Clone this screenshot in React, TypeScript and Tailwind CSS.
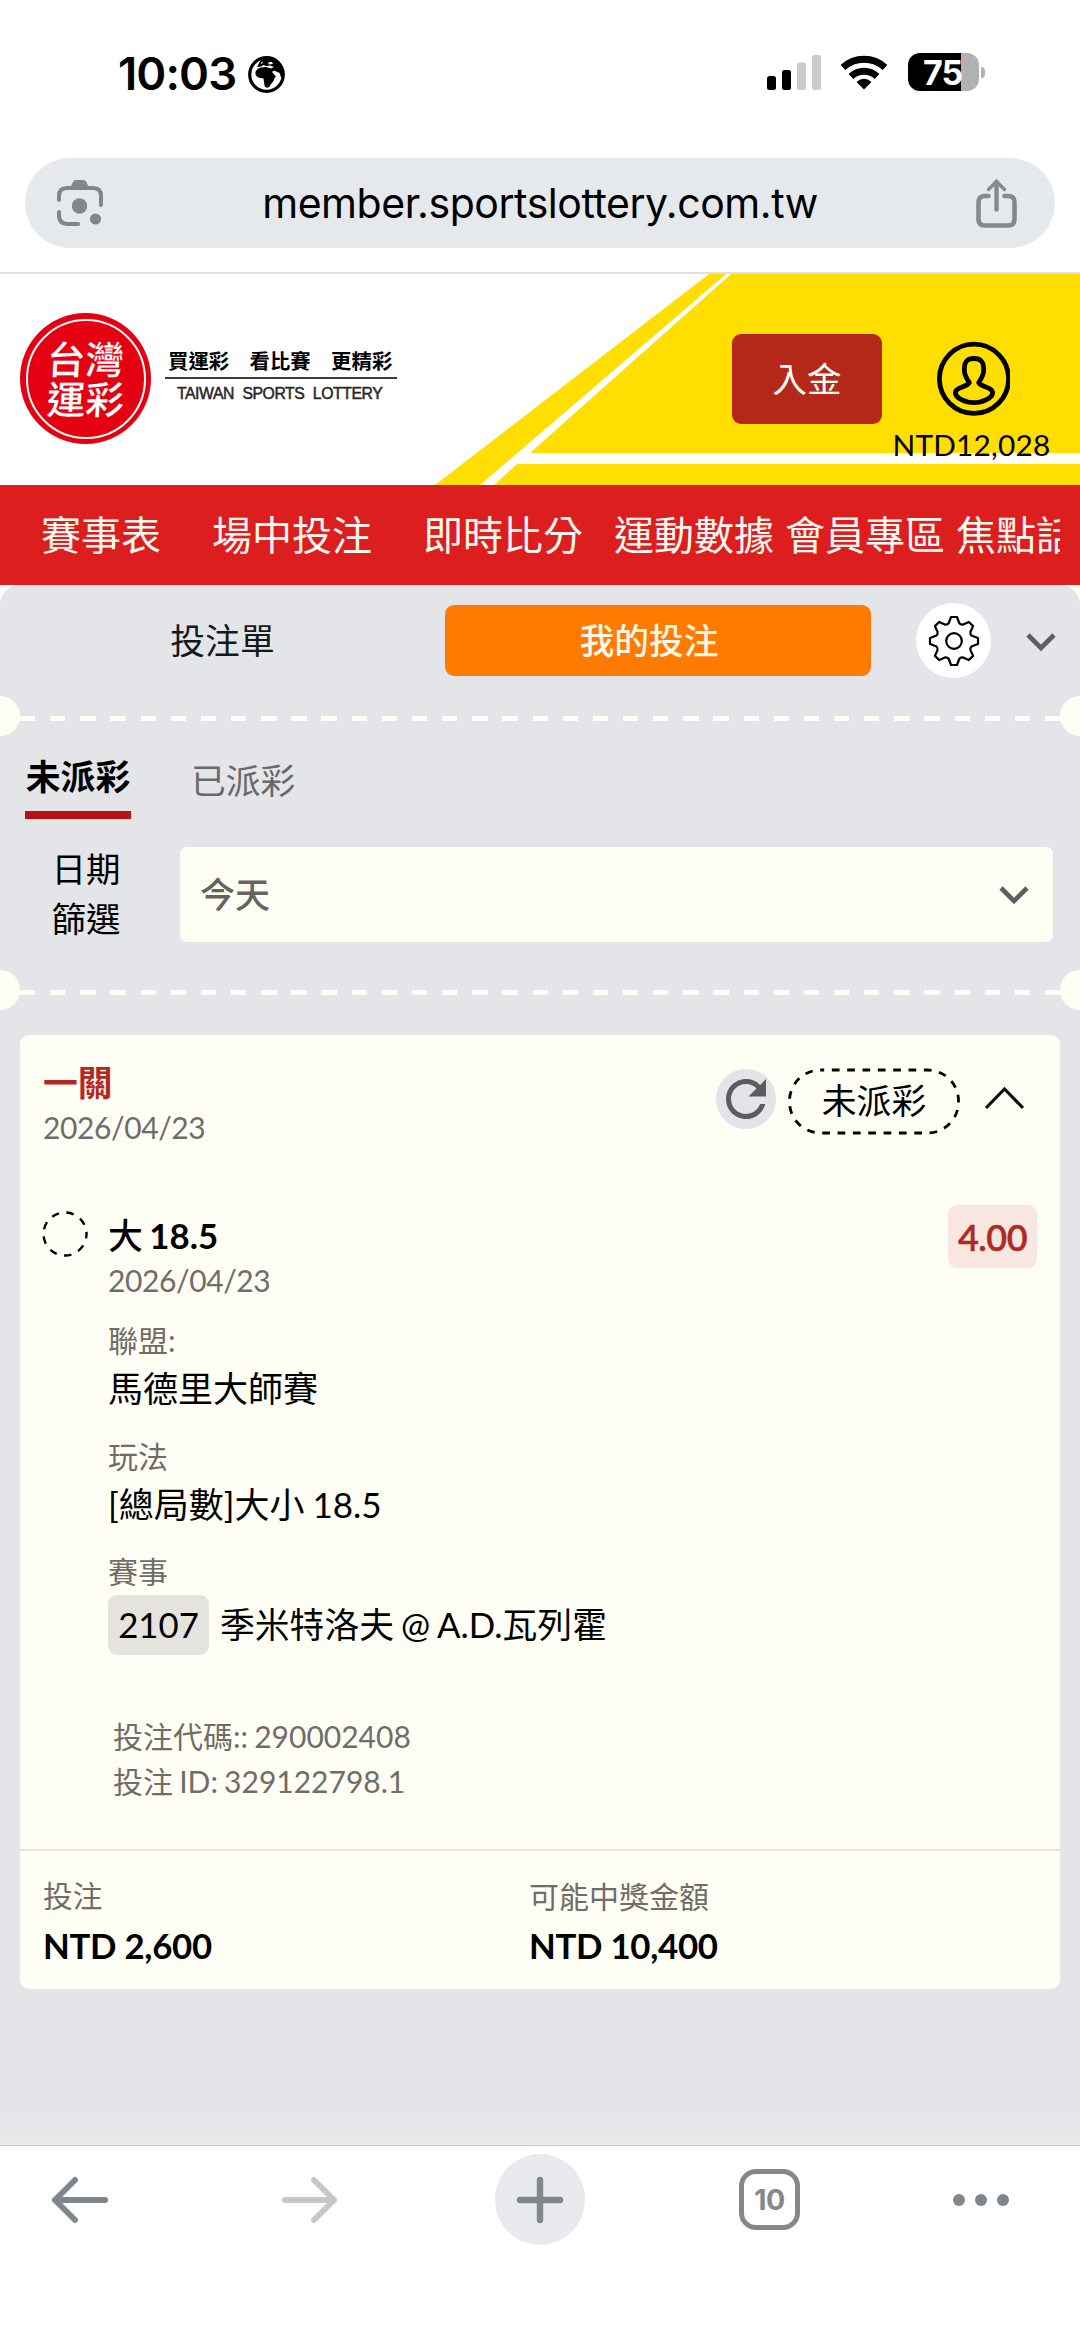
import { MdRefresh } from 'react-icons/md';

const navItems = [
  { label: '賽事表', gap: 'mr-[51px]' },
  { label: '場中投注', gap: 'mr-[51px]' },
  { label: '即時比分', gap: 'mr-[31px]' },
  { label: '運動數據', gap: 'mr-[11px]' },
  { label: '會員專區', gap: 'mr-[11px]' },
  { label: '焦點話題', gap: '' },
];

function StatusBar() {
  return (
    <div className="flex h-[158px] items-start justify-between bg-white pt-[53px] pr-[95px] pl-[118px] font-['Inter','Liberation_Sans',sans-serif]">
      <div className="flex items-center">
        <span className="w-[130px] text-[45.5px] leading-[42px] font-semibold tracking-[-0.9px] whitespace-nowrap">10:03</span>
        <svg className="h-[37px] w-[37px]" viewBox="0 0 37 37">
          <circle cx="18.5" cy="18.5" r="16.8" fill="#fff" stroke="#000" strokeWidth="3.2" />
          <path d="M9 11 C12 6 11 4 17 2.5 C25 1 32 5 35 12 L36 21 L33.5 22 C32 20 32.500 17 30.500 16.500 L26 14.500 L24 16 L28 20.500 L26.500 22 C26 26 23 27 22 30 C20.500 32.500 17 32 16.500 29.500 L15.500 22.500 C12 22 8 21.500 7.500 18 C7.200 14.500 10 12 13 11.500 L18 11 L23 12.500 L26 11 L22 9.500 L18 10 L15.500 9 L13 10.500 Z" />
          <path d="M20 6.500 L24 6 L25 8 L21 8.500 Z M12.500 7 L15 5.500 L14 8 Z" fill="#fff" />
        </svg>
      </div>
      <div className="flex items-start">
        <svg className="mt-[2px] h-[36px] w-[54px]" viewBox="0 0 54 36">
          <rect x="0" y="21" width="9" height="14" rx="2.500" />
          <rect x="15" y="15" width="9" height="20" rx="2.500" />
          <rect x="30" y="7.500" width="9" height="27.500" rx="2.500" fill="#cbcbcb" />
          <rect x="45" y="0" width="9" height="35" rx="2.500" fill="#cbcbcb" />
        </svg>
        <svg className="mt-[1px] ml-[19px] h-[36px] w-[48px]" viewBox="0 0 48 36">
          <path d="M3 13.500 A31 31 0 0 1 45 13.500" fill="none" stroke="#000" strokeWidth="7" />
          <path d="M11 22.500 A19 19 0 0 1 37 22.500" fill="none" stroke="#000" strokeWidth="7" />
          <path d="M24 35.500 L16.500 28 Q24 21.500 31.500 28 Z" />
        </svg>
        <div className="ml-5 flex h-[38px] w-[71px] items-center rounded-[12px] bg-[linear-gradient(to_right,#000_53px,#b1b1b1_53px)] pt-[1px] pl-[15px] text-[34px] leading-none font-bold tracking-[-1px] text-white">
          75
        </div>
        <div className="mt-[14px] ml-[2px] h-[11px] w-[4px] rounded-r-full bg-[#b1b1b1]" />
      </div>
    </div>
  );
}

function AddressBar() {
  return (
    <div className="h-[116px] border-b-2 border-[#e0e0e2] bg-white px-[25px]">
      <div className="flex h-[90px] items-center justify-between rounded-full bg-[#e6e9ec] pr-[38px] pl-[32px]">
        <svg className="h-[46px] w-[47px]" viewBox="0 0 47 46" fill="none" stroke="#828689" strokeWidth="4" strokeLinecap="round">
          <path d="M2 20 V16 Q2 8 10 8 H36 Q44 8 44 16 V25" />
          <path d="M2 32 V35 Q2 44 11 44 H21" />
          <path d="M13 8 L16 2 Q17 0 19 0 H26 Q28 0 29.500 2 L32 8 Z" fill="#828689" stroke="none" />
          <circle cx="22.500" cy="26" r="7.700" fill="#828689" stroke="none" />
          <circle cx="38.500" cy="39" r="5.600" fill="#828689" stroke="none" />
        </svg>
        <span className="font-['Inter','Liberation_Sans',sans-serif] text-[41px] leading-[50px] tracking-[-0.45px] whitespace-nowrap">
          member.sportslottery.com.tw
        </span>
        <svg className="h-[49px] w-[41px]" viewBox="0 0 41 49" fill="none" stroke="#85898c" strokeLinecap="round">
          <path d="M12.500 17 H9 Q2.500 17 2.500 23 V40 Q2.500 46.500 9 46.500 H32 Q38.500 46.500 38.500 40 V23 Q38.500 17 32 17 H28.500" strokeWidth="4.600" />
          <path d="M20.500 3 V30.500" strokeWidth="4.400" />
          <path d="M12.500 10.500 L20.500 2.500 L28.500 10.500" strokeWidth="3.400" />
        </svg>
      </div>
    </div>
  );
}

function Header() {
  return (
    <header className="relative h-[211px] overflow-hidden bg-white">
      <svg className="absolute inset-0 h-[211px] w-[1080px]" viewBox="0 0 1080 211">
        <path d="M709 0 H1080 V211 H435 Z" fill="#ffde00" />
        <path d="M726 0 H731 L530 179 H1080 V190 H517 L494 211 H480 Z" fill="#fff" />
      </svg>
      <div className="relative flex">
        <div className="mt-[39px] ml-5 flex h-[131px] w-[131px] items-center justify-center rounded-full bg-[#e50012]">
          <div className="flex h-[120px] w-[120px] flex-col items-center justify-center rounded-full border-2 border-white text-[38.5px] leading-[40px] font-medium text-white">
            <span className="-skew-x-3">台灣</span>
            <span className="-skew-x-3">運彩</span>
          </div>
        </div>
        <div className="mt-[73px] ml-[14px] w-[232px]">
          <div className="h-[32px] border-b-2 border-[#3e3a39] pl-[3px] text-[20.4px] leading-[28px] font-bold whitespace-nowrap">
            買運彩　看比賽　更精彩
          </div>
          <div className="pl-3 font-['Liberation_Sans',sans-serif] text-[15.8px] leading-[30px] tracking-[-0.45px] whitespace-nowrap text-[#2b2726] [-webkit-text-stroke:0.5px_#2b2726] [word-spacing:4.500px]">
            TAIWAN SPORTS LOTTERY
          </div>
        </div>
        <button className="mt-[60px] ml-[335px] flex h-[90px] w-[150px] items-center justify-center rounded-[9px] bg-[#b52819] text-[34.5px] leading-none text-[#fffef6]">
          入金
        </button>
        <div className="mt-[67px] ml-[12px] flex w-[155px] flex-col items-center">
          <svg className="ml-[4px] h-[76px] w-[73px]" viewBox="0 0 73 76" fill="none" stroke="#000" strokeWidth="4.800">
            <circle cx="37" cy="37.800" r="34.600" />
            <path strokeLinejoin="round" d="M37 17.500 C29 17.500 27 22 27.400 30 C27.600 35 30 38 32.300 41.500 C31 46 18 46 18.400 52 C18.800 57 28 61.700 37 61.700 C46 61.700 55.200 57 55.600 52 C56 46 43 46 41.700 41.500 C44 38 46.400 35 46.600 30 C47 22 45 17.500 37 17.500 Z" />
          </svg>
          <span className="mt-[11px] text-[29.8px] leading-[34px] tracking-[0.2px] whitespace-nowrap">NTD12,028</span>
        </div>
      </div>
    </header>
  );
}

function Nav() {
  return (
    <nav className="h-[100px] bg-[#dc1e1f] pr-[20px] pl-[41px]">
      <div className="flex h-full items-center overflow-hidden text-[40px] leading-none whitespace-nowrap text-[#fff8f0]">
        {navItems.map((item) => (
          <a key={item.label} className={`shrink-0 ${item.gap}`}>
            {item.label}
          </a>
        ))}
      </div>
    </nav>
  );
}

// eight teeth, each drawn pointing up and then rotated into place
function GearIcon() {
  const point = (x: number, y: number, tooth: number) => {
    const a = (tooth * Math.PI) / 4;
    return `${(x * Math.cos(a) - y * Math.sin(a)).toFixed(2)} ${(x * Math.sin(a) + y * Math.cos(a)).toFixed(2)}`;
  };
  let d = '';
  for (let i = 0; i < 8; i++) {
    d += `${i ? 'L' : 'M'}${point(-3, -24, i)} L${point(3, -24, i)} L${point(5.2, -18, i)} Q${point(6.6, -16, i)} ${point(-5.2, -18, i + 1)} `;
  }
  return (
    <svg className="h-[52px] w-[52px]" viewBox="-26 -26 52 52" fill="none" stroke="#000" strokeWidth="2.200" strokeLinejoin="round">
      <path d={`${d}Z`} />
      <circle r="7.800" />
    </svg>
  );
}

function Chevron() {
  return (
    <svg className="h-[20px] w-[30px]" viewBox="0 0 30 20" fill="none" stroke="#5d5e5f" strokeWidth="4.600">
      <path d="M2 3 L15 16 L28 3" />
    </svg>
  );
}

function Perforation() {
  return (
    <div className="flex h-[40px] items-center overflow-hidden">
      <div className="-ml-5 h-10 w-10 shrink-0 rounded-full bg-[#fffef5]" />
      <div className="mt-[5px] h-[5px] flex-1 bg-[repeating-linear-gradient(to_right,#fffef5_0_15.300px,transparent_15.300px_30.150px)]" />
      <div className="-mr-5 h-10 w-10 shrink-0 rounded-full bg-[#fffef5]" />
    </div>
  );
}

function Filters() {
  return (
    <>
      <div className="flex h-[111px] items-start">
        <div className="mt-[20px] w-[445px] text-center text-[34.8px] leading-[71px] text-[#17181a]">投注單</div>
        <div className="mt-[20px] h-[71px] w-[426px] rounded-[9px] bg-[#ff7a00] pr-[18px] text-center text-[34.8px] leading-[71px] font-medium text-[#fff8ea]">
          我的投注
        </div>
        <div className="mt-[18px] ml-[45px] flex h-[75px] w-[75px] items-center justify-center rounded-full bg-white">
          <GearIcon />
        </div>
        <div className="mt-[47px] ml-[35px]">
          <Chevron />
        </div>
      </div>
      <Perforation />
      <div className="flex h-[111px] pt-[16px] pl-[25px]">
        <div className="h-[67px] w-[106px] border-b-8 border-[#b91016] text-center text-[34.8px] leading-[49px] font-bold">未派彩</div>
        <div className="ml-[60px] pt-[4px] text-[34.8px] leading-[49px] text-[#67696b]">已派彩</div>
      </div>
      <div className="flex h-[123px] items-start">
        <div className="-mt-[3px] w-[180px] pr-[8px] text-center text-[34.5px] leading-[50px]">
          日期
          <br />
          篩選
        </div>
        <div className="flex h-[95px] w-[873px] items-center justify-between rounded-[7px] bg-[#fffef5] pr-[24px] pl-[20px] text-[35px] leading-none font-medium text-[#66645f]">
          今天
          <Chevron />
        </div>
      </div>
      <Perforation />
    </>
  );
}

function Detail({ label, value }: { label: string; value: string }) {
  return (
    <div className="h-[115.500px]">
      <div className="text-[30px] leading-[42px] text-[#706d68]">{label}</div>
      <div className="text-[35px] leading-[54px] [word-spacing:-1px]">{value}</div>
    </div>
  );
}

function BetCard() {
  return (
    <div className="mx-[20px] mt-[25px] h-[954px] rounded-[9px] bg-[#fffef5]">
      <div className="flex h-[170px] items-start pt-[23px] pl-[23px]">
        <div className="w-[673px]">
          <div className="text-[34.8px] leading-[50px] font-bold text-[#b5281f]">一關</div>
          <div className="-mt-px text-[30px] leading-[40px] tracking-[-0.4px] text-[#706d68]">2026/04/23</div>
        </div>
        <div className="mt-[11px] flex h-[60px] w-[60px] items-center justify-center rounded-full bg-[#e3e4e8]">
          <MdRefresh className="h-[60px] w-[60px] shrink-0 text-[#5c5d5f]" />
        </div>
        <div className="relative mt-[10px] ml-[12px] flex h-[67px] w-[172px] items-center justify-center text-[34.8px] leading-none">
          <svg className="absolute inset-0 h-[67px] w-[172px]" viewBox="0 0 172 67" fill="none" stroke="#000">
            <rect x="1.500" y="2" width="169" height="63" rx="31" strokeWidth="2.800" strokeDasharray="7.700 7.640" strokeDashoffset="4" />
          </svg>
          未派彩
        </div>
        <svg className="mt-[28px] ml-[24px] h-[24px] w-[40px]" viewBox="0 0 40 24" fill="none" stroke="#111" strokeWidth="3.200">
          <path d="M2 22 L20.500 3 L39 22" />
        </svg>
      </div>

      <div className="flex h-[644px] items-start pl-[22px]">
        <svg className="mt-[6px] h-[46px] w-[46px]" viewBox="0 0 46 46" fill="none" stroke="#000" strokeWidth="2.400">
          <circle cx="23" cy="23" r="21.500" strokeDasharray="7.500 7.510" strokeDashoffset="3" />
        </svg>
        <div className="ml-[20px] w-[840px]">
          <div className="pt-[6px] text-[34.8px] leading-[50px] font-bold [word-spacing:-2px]">
            <span className="font-medium">大</span> 18.5
          </div>
          <div className="-mt-px text-[30px] leading-[40px] tracking-[-0.4px] text-[#706d68]">2026/04/23</div>
          <div className="mt-[19px]">
            <Detail label="聯盟:" value="馬德里大師賽" />
            <Detail label="玩法" value="[總局數]大小 18.5" />
          </div>
          <div className="text-[30px] leading-[42px] text-[#706d68]">賽事</div>
          <div className="mt-[3px] flex h-[60px] items-center text-[34.8px]">
            <span className="mr-[11px] flex h-[60px] w-[101px] items-center justify-center rounded-[9px] bg-[#e5e3de]">2107</span>
            <span className="whitespace-nowrap [word-spacing:-2px]">季米特洛夫 @ A.D.瓦列霍</span>
          </div>
          <div className="mt-[59px] pl-[5px] text-[30px] leading-[45px] text-[#706d68] [word-spacing:-1.500px]">
            <div>投注代碼:: 290002408</div>
            <div>投注 ID: 329122798.1</div>
          </div>
        </div>
        <div className="flex h-[63px] w-[89px] items-center justify-center rounded-[9px] bg-[#f7e7e0] text-[36px] leading-none font-semibold tracking-[-0.5px] text-[#b02a22] [-webkit-text-stroke:0.4px_#b02a22]">
          4.00
        </div>
      </div>

      <div className="flex h-[140px] border-t-2 border-[#e6e4dc] pt-[22px] pl-[23px]">
        <div className="w-[486px]">
          <div className="text-[29.8px] leading-[46px] text-[#706d68]">投注</div>
          <div className="pt-px text-[34.8px] leading-[52px] font-bold tracking-[-0.3px]">NTD 2,600</div>
        </div>
        <div>
          <div className="text-[30px] leading-[46px] text-[#706d68]">可能中獎金額</div>
          <div className="pt-px text-[34.8px] leading-[52px] font-bold tracking-[-0.3px]">NTD 10,400</div>
        </div>
      </div>
    </div>
  );
}

function BottomBar() {
  return (
    <div className="flex h-[196px] items-start border-t border-[#c4c6c8] bg-white">
      <svg className="mt-[30px] ml-[51px] h-[48px] w-[58px]" viewBox="0 0 58 48" fill="none" stroke="#80868b" strokeWidth="6" strokeLinecap="round" strokeLinejoin="round">
        <path d="M54 24 H4 M24 4 L4 24 L24 44" />
      </svg>
      <svg className="mt-[30px] ml-[172px] h-[48px] w-[58px]" viewBox="0 0 58 48" fill="none" stroke="#c7c7c7" strokeWidth="6" strokeLinecap="round" strokeLinejoin="round">
        <path d="M4 24 H53 M33 4 L53 24 L33 44" />
      </svg>
      <div className="mt-[8px] ml-[156px] flex h-[91px] w-[90px] items-center justify-center rounded-full bg-[#e8eaed]">
        <svg className="h-[48px] w-[48px]" viewBox="0 0 48 48" stroke="#80868b" strokeWidth="6.400" strokeLinecap="round">
          <path d="M24 4 V44 M4 24 H44" />
        </svg>
      </div>
      <div className="mt-[23px] ml-[154px] flex h-[61px] w-[61px] items-center justify-center rounded-[17px] border-[5.500px] border-[#84888b] pt-[2px] font-['Inter',sans-serif] text-[28.500px] leading-none font-bold tracking-[-0.5px] text-[#84888b]">
        10
      </div>
      <div className="mt-[48px] ml-[153px] flex gap-[10px]">
        <span className="h-[12px] w-[12px] rounded-full bg-[#80868b]" />
        <span className="h-[12px] w-[12px] rounded-full bg-[#80868b]" />
        <span className="h-[12px] w-[12px] rounded-full bg-[#80868b]" />
      </div>
    </div>
  );
}

export default function App() {
  return (
    <div className="flex h-[2341px] w-[1080px] flex-col overflow-hidden bg-white font-['Lato','Noto_Sans_CJK_TC',sans-serif] text-black">
      <StatusBar />
      <AddressBar />
      <Header />
      <Nav />
      <main className="h-[1560px] bg-[#fffef5]">
        <div className="h-full rounded-t-[20px] bg-[linear-gradient(to_bottom,#e4e5e8_0,#e4e5e8_98%,#e8e9ea_100%)]">
          <Filters />
          <BetCard />
        </div>
      </main>
      <BottomBar />
    </div>
  );
}
